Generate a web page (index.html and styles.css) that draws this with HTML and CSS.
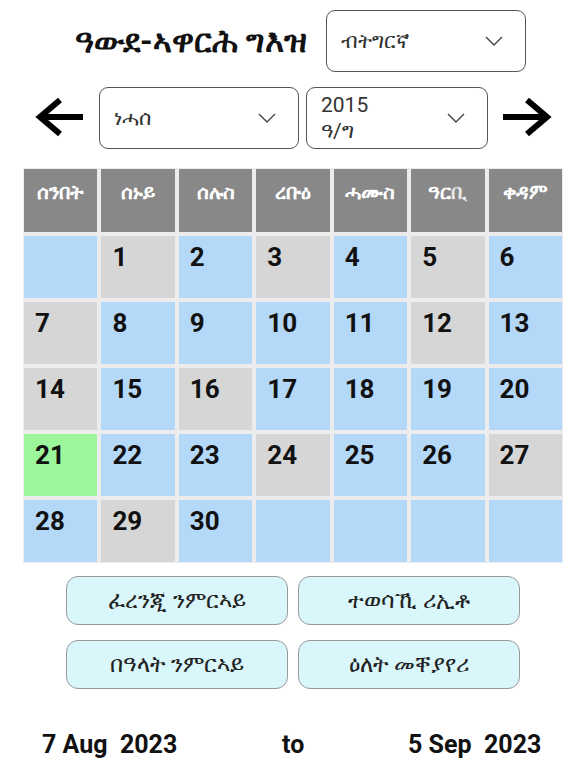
FILE: index.html
```html
<!DOCTYPE html>
<html lang="ti">
<head>
    <meta charset="UTF-8">
    <meta name="viewport" content="width=device-width, initial-scale=1.0">
    <title>ዓውደ-ኣዋርሕ ግእዝ</title>
    <link rel="stylesheet" href="styles.css">
</head>
<body>

<div class="app">
    <!-- Title + language -->
    <div class="top-row">
        <h1 class="title">ዓውደ-ኣዋርሕ ግእዝ</h1>
        <div class="select select-lang">
            <span class="select-text">ብትግርኛ</span>
            <svg class="chevron" width="18" height="10" viewBox="0 0 18 10"><path d="M1 1 L9 9 L17 1" fill="none" stroke="#444" stroke-width="1.4"/></svg>
        </div>
    </div>

    <!-- Month navigation -->
    <div class="nav-row">
        <svg class="arrow" width="52" height="40" viewBox="0 0 52 40"><path d="M49 19 H6 M26 2 L6 19 L26 36" fill="none" stroke="#000" stroke-width="6"/></svg>
        <div class="select select-month">
            <span class="select-text">ነሓሰ</span>
            <svg class="chevron" width="18" height="10" viewBox="0 0 18 10"><path d="M1 1 L9 9 L17 1" fill="none" stroke="#444" stroke-width="1.4"/></svg>
        </div>
        <div class="select select-year">
            <span class="select-text">2015<br>ዓ/ግ</span>
            <svg class="chevron" width="18" height="10" viewBox="0 0 18 10"><path d="M1 1 L9 9 L17 1" fill="none" stroke="#444" stroke-width="1.4"/></svg>
        </div>
        <svg class="arrow" width="52" height="40" viewBox="0 0 52 40"><path d="M2 19 H45 M26 2 L46 19 L26 36" fill="none" stroke="#000" stroke-width="6"/></svg>
    </div>

    <!-- Calendar -->
    <div class="calendar">
        <div class="day-name">ሰንበት</div>
        <div class="day-name">ሰኑይ</div>
        <div class="day-name">ሰሉስ</div>
        <div class="day-name">ረቡዕ</div>
        <div class="day-name">ሓሙስ</div>
        <div class="day-name">ዓርቢ</div>
        <div class="day-name">ቀዳም</div>
    </div>

    <!-- Buttons -->
    <div class="buttons">
        <button class="btn">ፈረንጂ ንምርኣይ</button>
        <button class="btn">ተወሳኺ ሪኢቶ</button>
        <button class="btn">በዓላት ንምርኣይ</button>
        <button class="btn">ዕለት መቐያየሪ</button>
    </div>

    <div class="range">
        <span class="range-from">7 Aug&nbsp; 2023</span>
        <span class="range-to">to</span>
        <span class="range-end">5 Sep&nbsp; 2023</span>
    </div>
</div>

<script>
    // g = grey, b = blue, t = today
    var days = [
        ["", "b"], ["1", "g"], ["2", "b"], ["3", "g"], ["4", "b"], ["5", "g"], ["6", "b"],
        ["7", "g"], ["8", "b"], ["9", "b"], ["10", "b"], ["11", "b"], ["12", "g"], ["13", "b"],
        ["14", "g"], ["15", "b"], ["16", "g"], ["17", "b"], ["18", "b"], ["19", "b"], ["20", "b"],
        ["21", "t"], ["22", "b"], ["23", "b"], ["24", "g"], ["25", "b"], ["26", "b"], ["27", "g"],
        ["28", "b"], ["29", "g"], ["30", "b"], ["", "b"], ["", "b"], ["", "b"], ["", "b"]
    ];
    var cal = document.querySelector(".calendar");
    for (var i = 0; i < days.length; i++) {
        var cell = document.createElement("div");
        cell.className = "day day-" + days[i][1];
        cell.textContent = days[i][0];
        cal.appendChild(cell);
    }
</script>

</body>
</html>
```

FILE: styles.css
```css
body {
    margin: 0;
    font-family: Roboto, "DejaVu Sans", sans-serif;
    background-color: #fff;
    color: #111;
}

.app {
    width: 576px;
    height: 768px;
}

.top-row {
    display: flex;
    align-items: center;
    padding: 10px 0 0 75px;
    height: 62px;
}

.title {
    margin: 0;
    font-size: 32px;
    font-weight: bold;
    width: 251px;
    white-space: nowrap;
}

.select {
    box-sizing: border-box;
    height: 62px;
    border: 1.5px solid #555;
    border-radius: 9px;
    display: flex;
    align-items: center;
    justify-content: space-between;
    padding: 0 22px 0 14px;
    font-size: 21px;
    color: #333;
}

.select-lang {
    width: 200px;
}

.nav-row {
    display: flex;
    align-items: center;
    padding: 15px 0 0 34px;
    height: 62px;
}

.nav-row .arrow {
    flex: none;
}

.select-month {
    width: 200px;
    margin-left: 13px;
}

.select-year {
    width: 182px;
    margin: 0 13px 0 7px;
    line-height: 26px;
}

.calendar {
    margin: 19px 0 0 23px;
    width: 540px;
    box-sizing: border-box;
    padding: 1px;
    background-color: #ececec;
    display: grid;
    grid-template-columns: repeat(7, 1fr);
    grid-template-rows: 63px repeat(5, 62px);
    gap: 4px;
}

.day-name {
    background-color: #888888;
    color: #fff;
    font-weight: bold;
    font-size: 20px;
    text-align: center;
    padding-top: 11px;
}

.day {
    font-weight: bold;
    font-size: 26px;
    padding: 6px 0 0 11px;
}

.day-b {
    background-color: #b4d8f8;
}

.day-g {
    background-color: #d6d6d6;
}

.day-t {
    background-color: #9cf79c;
}

.buttons {
    margin: 13px 0 0 66px;
    display: grid;
    grid-template-columns: 222px 222px;
    grid-auto-rows: 49px;
    column-gap: 10px;
    row-gap: 15px;
}

.btn {
    background-color: #d9f6fa;
    border: 1.5px solid #999;
    border-radius: 12px;
    font-family: Roboto, "DejaVu Sans", sans-serif;
    font-size: 23px;
    color: #222;
    cursor: pointer;
}

.range {
    display: flex;
    align-items: center;
    margin-top: 41px;
    padding: 0 20px 0 42px;
    font-size: 25px;
    font-weight: bold;
}

.range-from {
    width: 240px;
}

.range-to {
    width: 126px;
}
```
